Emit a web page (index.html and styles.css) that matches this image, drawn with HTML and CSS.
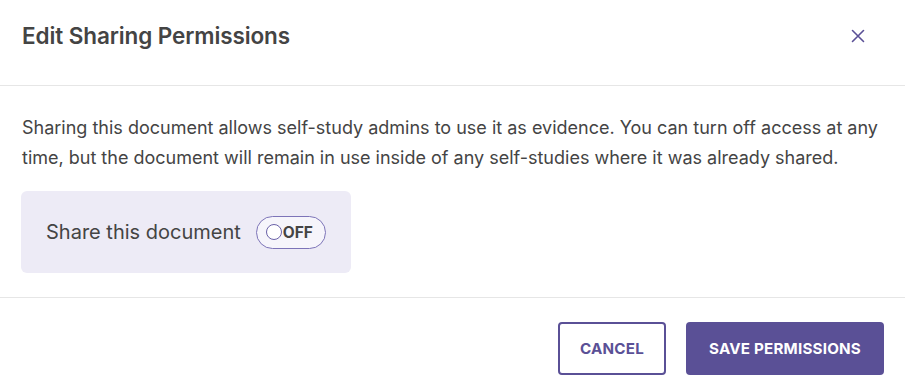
FILE: index.html
```html
<!DOCTYPE html>
<html>
<head>
<meta charset="utf-8">
<link rel="stylesheet" href="styles.css">
</head>
<body>
<div class="modal">
  <header class="modal-header">
    <h2 class="modal-title">Edit Sharing Permissions</h2>
    <button class="close" aria-label="Close">
      <svg width="14" height="14" viewBox="0 0 14 14"><path d="M1.5 1.5 L12.5 12.5 M12.5 1.5 L1.5 12.5" stroke="#5a5096" stroke-width="1.6" stroke-linecap="round" fill="none"/></svg>
    </button>
  </header>
  <section class="modal-body">
    <p class="desc">Sharing this document allows self-study admins to use it as evidence. You can turn off access at any time, but the document will remain in use inside of any self-studies where it was already shared.</p>
    <div class="share-box">
      <span class="share-label">Share this document</span>
      <span class="toggle"><span class="knob"></span><span class="toggle-text">OFF</span></span>
    </div>
  </section>
  <footer class="modal-footer">
    <button class="btn btn-outline">CANCEL</button>
    <button class="btn btn-primary">SAVE PERMISSIONS</button>
  </footer>
</div>
</body>
</html>
```
FILE: styles.css
```css
* { box-sizing: border-box; }
html, body { margin: 0; padding: 0; background: #fff; }
body { font-family: Inter, "Noto Sans", Arial, sans-serif; color: #444; }
.modal { width: 905px; height: 390px; display: flex; flex-direction: column; }
.modal-header {
  height: 86px; flex-shrink: 0;
  display: flex; align-items: center; justify-content: space-between;
  padding: 0 40px 14px 22px;
  border-bottom: 1px solid #e6e6e6;
}
.modal-title { margin: 0; font-size: 22.5px; font-weight: 600; color: #444; letter-spacing: -0.1px; }
.close { border: 0; background: none; padding: 0; width: 14px; height: 14px; display: flex; cursor: pointer; }
.modal-body { flex-shrink: 0; padding: 27px 22px 24px 22px; border-bottom: 1px solid #e6e6e6; }
.desc { margin: 0 -30px 18px 0; font-size: 18px; line-height: 30px; color: #444; width: 860px; }
.share-box {
  width: 330px; height: 82px;
  background: #edebf6; border-radius: 6px;
  display: flex; align-items: center;
  padding: 0 25px; gap: 15px;
  margin-left: -1px;
}
.share-label { font-size: 20px; color: #444; }
.toggle {
  width: 70px; height: 33px; flex-shrink: 0;
  border: 1px solid #7d74b8; border-radius: 17px;
  background: #f6f5fb;
  display: flex; align-items: center; padding-left: 9px; gap: 1px;
}
.knob { flex-shrink: 0; width: 16px; height: 16px; border: 1.5px solid #6a61a8; border-radius: 50%; background: #fff; }
.toggle-text { font-size: 15.5px; font-weight: 700; color: #444; }
.modal-footer {
  flex: 1;
  display: flex; justify-content: flex-end; align-items: flex-start;
  padding: 24px 21px 0 0; gap: 20px;
}
.btn {
  height: 53px; border-radius: 4px;
  font-family: Inter, "Noto Sans", Arial, sans-serif;
  font-size: 15.2px; font-weight: 700; letter-spacing: 0.2px;
  cursor: pointer;
}
.btn-outline { width: 108px; background: #fff; border: 2px solid #5a5096; color: #5a5096; }
.btn-primary { width: 198px; background: #5a5096; border: 0; color: #fff; }
```
